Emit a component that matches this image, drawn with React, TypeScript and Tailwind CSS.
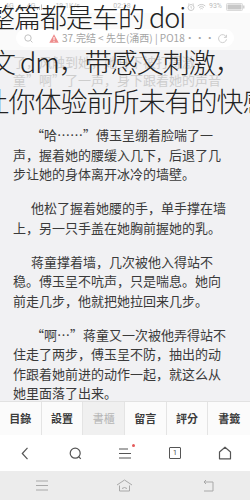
import React from "react";

function Bars() {
  return (
    <svg width="6" height="6" viewBox="0 0 6 6" className="fill-[#c4c4c4]">
      <rect x="0" y="4" width="1" height="2" />
      <rect x="2" y="2.5" width="1" height="3.5" />
      <rect x="4" y="0.5" width="1" height="5.5" />
    </svg>
  );
}

function StatusBar() {
  return (
    <div className="h-[13px] bg-white grid grid-cols-3 items-center px-[5px] text-[7px] leading-none text-[#bdbdbd] font-['Roboto','Noto_Sans',sans-serif]">
      <div className="flex items-center gap-[2px]">
        <span>4G</span>
        <Bars />
        <span className="ml-[3px]">4G</span>
        <Bars />
        <span className="ml-[10px]">19.1K/s</span>
      </div>
      <div className="text-center pr-[6px]">02:18</div>
      <div className="flex items-center justify-end gap-[2px]">
        <svg width="8" height="8" viewBox="0 0 8 8" className="fill-none stroke-[#c4c4c4]">
          <circle cx="4" cy="4.5" r="3" strokeWidth="0.9" />
          <path d="M4 3v1.7l1 .6M1 1.5l1.3-1M7 1.5l-1.3-1" strokeWidth="0.8" />
        </svg>
        <svg width="9" height="8" viewBox="0 0 9 8" className="fill-none stroke-[#c4c4c4]">
          <path d="M0.7 3A5.5 5.5 0 0 1 8.3 3M2 4.5a3.6 3.6 0 0 1 5 0M3.3 6a1.7 1.7 0 0 1 2.4 0" strokeWidth="0.9" />
        </svg>
        <span className="ml-[1px]">93%</span>
        <svg width="19" height="8" viewBox="0 0 19 8" className="ml-[2px]">
          <rect x="0.5" y="0.5" width="16" height="7" rx="1" className="fill-none stroke-[#d0d0d0]" strokeWidth="0.8" />
          <rect x="1.5" y="1.5" width="14" height="5" className="fill-[#c8c8c8]" />
          <rect x="17" y="2.5" width="1.5" height="3" className="fill-[#d0d0d0]" />
        </svg>
      </div>
    </div>
  );
}

function UrlBar() {
  return (
    <div className="h-[37px] bg-[#fafafa] pt-[16px] px-[16px]">
      <div className="h-[18px] rounded-full bg-white flex items-center pl-[8px] pr-[6px] text-[10px] leading-none text-[#a4a4a4]">
        <svg width="9" height="9" viewBox="0 0 9 9" className="fill-none stroke-[#c2c2c2]">
          <circle cx="4" cy="4" r="3.2" strokeWidth="1" />
          <path d="M6.4 6.4L8.4 8.4" strokeWidth="1" />
        </svg>
        <svg width="10" height="9" viewBox="0 0 10 9" className="ml-[16px]">
          <path d="M5 0.3L9.7 8.7H0.3Z" className="fill-[#ee8c8c]" />
          <rect x="4.5" y="3" width="1" height="3.2" className="fill-white" />
          <rect x="4.5" y="6.9" width="1" height="1" className="fill-white" />
        </svg>
        <span className="ml-[3px] whitespace-nowrap">37.完结 &lt; 先生(涌西) | PO18···</span>
        <div className="flex-1" />
        <svg width="11" height="11" viewBox="0 0 11 11" className="fill-none stroke-[#cfcfcf]">
          <path d="M9.3 4.2A4 4 0 1 0 9.5 6.3" strokeWidth="1" />
          <path d="M9.5 1.8v2.6H6.9" strokeWidth="1" />
        </svg>
      </div>
    </div>
  );
}

const paras: { lines: string[] }[] = [
  { lines: ["“哈……”傅玉呈绷着脸喘了一", "声，握着她的腰缓入几下，后退了几", "步让她的身体离开冰冷的墙壁。"] },
  { lines: ["他松了握着她腰的手，单手撑在墙", "上，另一只手盖在她胸前握她的乳。"] },
  { lines: ["蒋童撑着墙，几次被他入得站不", "稳。傅玉呈不吭声，只是喘息。她向", "前走几步，他就把她拉回来几步。"] },
  {
    lines: [
      "“啊…”蒋童又一次被他弄得站不",
      "住走了两步，傅玉呈不防，抽出的动",
      "作跟着她前进的动作一起，就这么从",
      "她里面落了出来。",
    ],
  },
];

const tabs = ["目錄", "設置", "書櫃", "留言", "評分", "書籤"];

function Toolbar() {
  return (
    <div className="h-[36px] bg-white grid grid-cols-5 items-center">
      <div className="flex justify-center">
        <svg width="8" height="13" viewBox="0 0 8 13" className="fill-none stroke-[#555]">
          <path d="M6.5 0.8L1.3 6.5L6.5 12.2" strokeWidth="1.2" />
        </svg>
      </div>
      <div className="flex justify-center">
        <svg width="13" height="13" viewBox="0 0 13 13" className="fill-none stroke-[#555]">
          <circle cx="6.2" cy="6.2" r="5" strokeWidth="1.2" />
          <path d="M9.6 9.6L11.8 11.8" strokeWidth="1.2" />
        </svg>
      </div>
      <div className="flex justify-center">
        <div className="relative">
          <svg width="14" height="11" viewBox="0 0 14 11" className="fill-none stroke-[#555]">
            <path d="M1 1H10M1 5.5H13M1 10H13" strokeWidth="1.2" />
          </svg>
          <div className="absolute -top-[4px] -right-[3px] w-[3px] h-[3px] rounded-full bg-[#e45a5a]" />
        </div>
      </div>
      <div className="flex justify-center">
        <div className="w-[12px] h-[12px] border border-[#555] rounded-[1px] flex items-center justify-center text-[7px] leading-none text-[#444] font-['Roboto',sans-serif]">
          1
        </div>
      </div>
      <div className="flex justify-center">
        <svg width="14" height="14" viewBox="0 0 14 14" className="fill-none stroke-[#555]">
          <path d="M1.5 6L7 1.2L12.5 6V12.8H1.5Z" strokeWidth="1.2" strokeLinejoin="round" />
        </svg>
      </div>
    </div>
  );
}

function NavBar() {
  return (
    <div className="h-[29px] bg-[#ececec] grid grid-cols-3 items-center">
      <div className="flex justify-center">
        <svg width="14" height="11" viewBox="0 0 14 11" className="fill-none stroke-[#a8a8a8]">
          <path d="M1 1H13M1 5.5H13M1 10H13" strokeWidth="1" />
        </svg>
      </div>
      <div className="flex justify-center">
        <svg width="17" height="13" viewBox="0 0 17 13" className="fill-none stroke-[#a8a8a8]">
          <path d="M1 6L8.5 1L16 6" strokeWidth="1" />
          <path d="M3.5 6.5V12H13.5V6.5" strokeWidth="1" />
          <path d="M6 9.5Q8.5 7.5 11 9.5" strokeWidth="1" />
        </svg>
      </div>
      <div className="flex justify-center">
        <svg width="14" height="13" viewBox="0 0 14 13" className="fill-none stroke-[#a8a8a8]">
          <path d="M3 3H12V12H3" strokeWidth="1" />
          <path d="M5 1L3 3L5 5" strokeWidth="1" />
        </svg>
      </div>
    </div>
  );
}

export default function App() {
  return (
    <div className="relative w-[250px] h-[500px] overflow-hidden bg-[#f1f1f3] flex flex-col font-['Noto_Sans_CJK_SC','Noto_Sans',sans-serif]">
      <StatusBar />
      <UrlBar />
      <div className="pt-[3px] px-[13px] text-[13px] leading-[18px] text-[#cdcdcd] whitespace-nowrap">
        <div>了，风触到她，她身下被打得激</div>
        <div>童”啊”了一声，身下跟着她的声音</div>
      </div>
      <div className="flex-1 overflow-hidden px-[13px] pt-[36px] text-[13px] leading-[19.5px] text-[#3a3a3a]">
        {paras.map((p, i) => (
          <div key={i} className={i === 0 ? "" : "mt-[14.5px]"}>
            {p.lines.map((l, j) => (
              <div key={j} className={j === 0 ? "pl-[18px] whitespace-nowrap" : "whitespace-nowrap"}>
                {l}
              </div>
            ))}
          </div>
        ))}
      </div>
      <div className="h-[34px] bg-[#f7f7f7] border-t border-[#e2e2e2] grid grid-cols-6">
        {tabs.map((t, i) => (
          <div
            key={t}
            className={
              (i < 5 ? "border-r border-[#e4e4e4] " : "") +
              (i === 2
                ? "bg-[#f0f0f0] text-[#b5b5b5] font-normal "
                : "bg-[#fbfbfb] text-[#3c3c3c] font-bold ") +
              "flex items-center justify-center text-[11px] leading-none font-['Noto_Sans_CJK_TC','Noto_Sans_CJK_SC',sans-serif]"
            }
          >
            {t}
          </div>
        ))}
      </div>
      <Toolbar />
      <NavBar />

      <div className="absolute inset-0 pointer-events-none text-[27px] leading-[30px] tracking-[-1px] text-[#222] font-light whitespace-nowrap">
        <div className="absolute top-[1.5px] left-[-12px]">整篇都是车的 doi</div>
        <div className="absolute top-[46.5px] left-[-11px]">文 dm，带感又刺激，</div>
        <div className="absolute top-[85.5px] left-[-17.5px]">让你体验前所未有的快感</div>
      </div>
    </div>
  );
}
